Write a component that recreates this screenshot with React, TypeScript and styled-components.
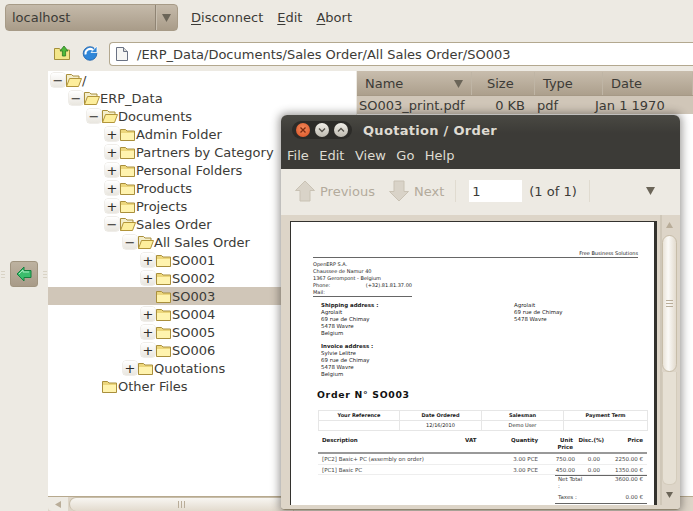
import React from "react";
import styled, { createGlobalStyle } from "styled-components";

const Global = createGlobalStyle`
  html, body { margin: 0; padding: 0; background: #edeae3; }
  body { font-family: "DejaVu Sans", sans-serif; font-size: 13px; color: #3c3b37; }
`;

const Screen = styled.div`
  position: relative; width: 693px; height: 511px; overflow: hidden; background: #edeae3;
`;
const TopBar = styled.div`
  height: 42px; box-sizing: border-box; padding: 4px 0 0 5px; display: flex; align-items: flex-start; gap: 13px;
`;
const Combo = styled.div`
  width: 173px; height: 27px; box-sizing: border-box; display: flex; align-items: center;
  border: 1px solid #a79b87; border-radius: 4px;
  background: linear-gradient(#c5baaa, #a99c89);
`;
const ComboText = styled.span`flex: 1; padding-left: 6px; color: #3c3b37;`;
const ComboArrow = styled.span`
  width: 21px; height: 25px; display: flex; align-items: center; justify-content: center;
  border-left: 1px solid #8f8474; box-shadow: inset 1px 0 0 #c8bfb0;
`;
const Tri = styled.svg`display: block;`;
const Menu = styled.div`display: flex; gap: 14px; height: 27px; align-items: center;`;
const MenuItem = styled.span`color: #3c3b37; u { text-underline-offset: 2px; }`;
const AddrBar = styled.div`
  height: 29px; display: flex; align-items: flex-start; padding-left: 54px;
`;
const ToolIcon = styled.svg`margin: 3px 12px 0 0; flex: none;`;
const AddrInput = styled.div`
  flex: 1; margin-left: -1px; height: 24px; box-sizing: border-box; display: flex; align-items: center; gap: 9px;
  padding-left: 6px; background: #fff; border: 1px solid #b3a88f; border-right: 0; border-radius: 4px 0 0 4px;
  white-space: nowrap; color: #3c3b37;
`;
const Body = styled.div`display: flex; height: 440px;`;
const Side = styled.div`
  width: 48px; flex: none; display: flex; align-items: center; justify-content: space-between;
  padding: 0 1px 34px 1px; box-sizing: border-box;
`;
const Grip = styled.div`
  width: 4px; height: 7px;
  background: repeating-linear-gradient(#d9d3c5 0 1px, transparent 1px 3px);
`;
const BackBtn = styled.div`
  width: 28px; height: 26px; box-sizing: border-box; border-radius: 3px; border: 1px solid #a0947f;
  background: linear-gradient(#bdb2a0, #a89b88); display: flex; align-items: center; justify-content: center;
`;
const Panes = styled.div`flex: 1; display: flex; flex-direction: column; min-width: 0;`;
const PaneRow = styled.div`flex: 1; display: flex; gap: 1px; min-height: 0;`;
const TreePane = styled.div`width: 308px; flex: none; background: #fff;`;
const TreeRow = styled.div<{ $depth: number; $sel?: boolean }>`
  height: 18px; display: flex; align-items: center; padding-left: ${(p) => 3 + p.$depth * 18}px;
  background: ${(p) => (p.$sel ? "#d0c6b8" : "transparent")}; white-space: nowrap; color: #3c3b37;
`;
const Expander = styled.span`
  width: 14px; height: 14px; flex: none; box-sizing: border-box; border-radius: 3px;
  background: linear-gradient(#ffffff, #e9e6df); box-shadow: 0 0 0 .5px #e0dcd3;
  display: flex; align-items: center; justify-content: center; color: #2e2d2a;
`;
const ExpanderGap = styled.span`width: 14px; flex: none;`;
const FolderIcon = styled.svg`width: 17px; height: 15px; flex: none;`;
const ListPane = styled.div`flex: 1; background: #fff; min-width: 0;`;
const ListHead = styled.div`
  height: 25px; display: grid; grid-template-columns: 115px 63px 68px 1fr; background: linear-gradient(#c8bdad, #ab9e8b);
  box-shadow: inset 0 -1px 0 #a69986;
`;
const HeadCell = styled.div<{ $pad: number; $split?: boolean }>`
  padding-left: ${(p) => p.$pad}px; display: flex; align-items: center; color: #3c3b37;
  justify-content: ${(p) => (p.$split ? "space-between" : "flex-start")};
  box-shadow: inset -1px 0 0 #bfb5a5; padding-right: 9px; margin: 1px 0;
`;
const ListRow = styled.div`
  height: 18px; display: grid; grid-template-columns: 115px 53px 68px 1fr; background: #d0c6b8; align-items: center;
  color: #3c3b37;
`;
const ListCell = styled.div<{ $pad?: number; $right?: boolean }>`
  padding-left: ${(p) => p.$pad ?? 0}px; text-align: ${(p) => (p.$right ? "right" : "left")}; white-space: nowrap;
`;
const HScroll = styled.div`
  height: 15px; box-sizing: border-box; border-top: 1px solid #b7a98e; background: #ddd5c8; display: flex; align-items: stretch;
`;
const HArrow = styled.div`
  width: 20px; background: #edeae3; border-radius: 0 0 0 4px; display: flex; align-items: center; justify-content: center;
`;
const HThumb = styled.div`
  width: 225px; margin-left: 1px; box-sizing: border-box; border: 1px solid #c7bda9; border-bottom: 0; border-radius: 7px 0 0 7px;
  background: linear-gradient(#f8f6f2, #e2dacd); display: flex; align-items: center; justify-content: center;
`;
const ThumbGrip = styled.div`
  width: 7px; height: 7px; background: repeating-linear-gradient(90deg, #b9ad99 0 1px, transparent 1px 3px);
`;

/* floating window */
const Win = styled.div`
  position: absolute; left: 281px; top: 115px; width: 399px; height: 395px; display: flex; flex-direction: column;
  border-radius: 6px 6px 4px 4px; background: #edeae3; overflow: hidden;
  box-shadow: 0 0 9px 2px rgba(40,36,30,.45); border-bottom: 1px solid #8f8570; box-sizing: border-box;
`;
const TitleBar = styled.div`
  height: 30px; flex: none; background: linear-gradient(#4a4943, #3c3b37 60%); display: flex; align-items: center; padding-left: 11px; gap: 11px;
`;
const WinBtns = styled.div`
  width: 60px; height: 18px; border-radius: 9px; background: #2c2b28; display: flex; align-items: center; justify-content: space-around; padding: 0 2px; box-sizing: border-box;
`;
const WinBtn = styled.span<{ $close?: boolean }>`
  width: 14px; height: 14px; border-radius: 50%; display: flex; align-items: center; justify-content: center;
  background: ${(p) => (p.$close ? "radial-gradient(circle at 50% 40%, #f58b5c, #d84f22)" : "linear-gradient(#f0eee8, #bdb9af)")};
`;
const WinTitle = styled.span`color: #dfdbd2; font-weight: bold; font-size: 13px; letter-spacing: .3px;`;
const WinMenu = styled.div`
  height: 24px; box-sizing: border-box; padding: 0 0 4px 6px; flex: none; background: #3c3b37; display: flex; align-items: center; gap: 10.5px; color: #dfdbd2;
`;
const WinTools = styled.div`
  height: 46px; box-sizing: border-box; padding: 0 0 2px 14px; flex: none; display: flex; align-items: center; color: #3c3b37; background: #edeae3;
`;
const GhostLabel = styled.span<{ $after: number }>`color: #b3ab9c; margin: 0 ${(p) => p.$after}px 0 5px;`;
const ToolSep = styled.span<{ $before: number; $after: number }>`
  width: 1px; height: 22px; background: #e0dbd0; margin: 0 ${(p) => p.$after}px 0 ${(p) => p.$before}px;
`;
const PageInput = styled.div`
  width: 53px; height: 22px; background: #fff; padding-left: 3px; box-sizing: border-box; display: flex; align-items: center; margin-right: 7px; color: #3c3b37;
`;
const ToolRight = styled.div`flex: 1; display: flex; justify-content: flex-end; padding-right: 25px;`;
const DocArea = styled.div`
  flex: 1; display: flex; min-height: 0; background: #ddd5c8; padding: 0 2px 4px 2px;
`;
const DocView = styled.div`flex: 1; min-width: 0; overflow: hidden; padding: 6px 0 0 7px; background: #ddd5c8;`;
const Page = styled.div`
  width: 367px; height: 290px; box-sizing: border-box; background: #fff; color: #222; overflow: hidden;
  border: solid #33322e; border-width: 1px 3px 0 1px; padding: 28px 0 0 22px;
  font-size: 5px; line-height: 7px;
`;
const DocBrand = styled.div`
  width: 325px; text-align: right; border-bottom: 1px solid #666; height: 7px; box-sizing: content-box; line-height: 7px;
`;
const Company = styled.div`
  width: 99px; margin-top: 3px; border-bottom: 1px solid #666; height: 35px;
`;
const PhoneLine = styled.div`display: flex; justify-content: space-between;`;
const Addresses = styled.div`display: flex; padding: 5px 0 0 8px; font-size: 5.45px; white-space: nowrap;`;
const AddrCol = styled.div`width: 193px;`;
const AddrRight = styled.div``;
const AddrHead = styled.div`font-weight: bold;`;
const AddrBlock = styled.div`margin-bottom: 6px;`;
const OrderTitle = styled.div`font-size: 9.3px; font-weight: bold; line-height: 12px; letter-spacing: .7px; margin: 11px 0 0 4px; color: #111;`;
const InfoTable = styled.div`
  width: 329px; margin: 9px 0 0 5px; display: grid; grid-template-columns: 81px 82px 82px 84px;
  border-top: 1px solid #e6e6e6; border-left: 1px solid #e6e6e6;
`;
const InfoCell = styled.div<{ $bold?: boolean }>`
  height: 9px; line-height: 9px; text-align: center; border-right: 1px solid #e6e6e6; border-bottom: 1px solid #e6e6e6;
  font-weight: ${(p) => (p.$bold ? "bold" : "normal")};
`;
const LineGrid = styled.div`
  display: grid; grid-template-columns: 143px 12px 61px 37px 29px 39px; margin-left: 5px; width: 329px; padding-left: 4px; box-sizing: border-box;
  font-size: 5.5px;
`;
const LineHead = styled(LineGrid)`
  margin-top: 6px; height: 17px; font-weight: bold; border-bottom: 2px solid #999;
`;
const LineRow = styled(LineGrid)`
  height: 10.5px; line-height: 10.5px; border-bottom: 1px solid #eee; color: #444;
`;
const Cell = styled.div<{ $a?: string; $pr?: number }>`
  text-align: ${(p) => p.$a ?? "left"}; white-space: nowrap; padding-right: ${(p) => p.$pr ?? 0}px;
`;
const Totals = styled.div`
  margin: 0 0 0 242px; width: 92px; border-top: 1px solid #666; display: grid; grid-template-columns: 1fr auto; padding: 0 4px 0 3px; box-sizing: border-box; color: #444;
  font-size: 5.5px;
`;
const TotalLabel = styled.div`width: 27px; padding-bottom: 4px;`;
const TotalRule = styled.div`grid-column: 1 / -1; height: 1px; background: #666; margin: -2px -4px 0 -3px;`;
const VScroll = styled.div`
  width: 18px; flex: none; display: flex; flex-direction: column; align-items: center; background: #ddd5c8; box-shadow: inset 2px 0 0 #cfc7b8;
`;
const VArrow = styled.div`height: 20px; flex: none; display: flex; align-items: center; justify-content: center; width: 100%;`;
const VThumb = styled.div`
  width: 15px; height: 137px; flex: none; box-sizing: border-box; border: 1px solid #c7bda9; border-radius: 8px;
  background: linear-gradient(90deg, #e9e3d8, #fbfaf7 40%, #e2dacd); display: flex; align-items: center; justify-content: center;
`;
const VGrip = styled.div`
  width: 7px; height: 7px; background: repeating-linear-gradient(#b9ad99 0 1px, transparent 1px 3px);
`;
const VTrack = styled.div`
  flex: 1; width: 15px; box-sizing: border-box; border: 1px solid #d4ccbc; border-top: 0; border-radius: 0 0 6px 6px; background: #e6e0d4;
`;

const Tr = ({ c = "#6b6558", w = 9, h = 8, dir = "down" }: { c?: string; w?: number; h?: number; dir?: string }) => {
  const pts = dir === "down" ? `0,0 ${w},0 ${w / 2},${h}` : dir === "up" ? `0,${h} ${w},${h} ${w / 2},0` : `${w},0 ${w},${h} 0,${h / 2}`;
  return <Tri width={w} height={h} viewBox={`0 0 ${w} ${h}`}><polygon points={pts} fill={c} /></Tri>;
};

const OpenFolder = () => (
  <FolderIcon viewBox="0 0 17 15">
    <path d="M1.5 13.5V1.5h5l1.5 1.5h6v3" fill="#f4eecb" stroke="#a98f3c" />
    <path d="M1.5 13.5 4.5 5.5h12l-3 8z" fill="#fdee9c" stroke="#b2953a" strokeLinejoin="round" />
  </FolderIcon>
);
const ClosedFolder = () => (
  <FolderIcon viewBox="0 0 17 15">
    <path d="M1.5 13.5V2.5h5l1.5 1.5h7.5v9.5z" fill="#ecd67c" stroke="#a98f3c" strokeLinejoin="round" />
    <path d="M2 13V6h13v7z" fill="#fff3ae" />
  </FolderIcon>
);

type Node = { d: number; t: string; exp?: "+" | "-"; open?: boolean; sel?: boolean };
const nodes: Node[] = [
  { d: 0, t: "/", exp: "-", open: true },
  { d: 1, t: "ERP_Data", exp: "-", open: true },
  { d: 2, t: "Documents", exp: "-", open: true },
  { d: 3, t: "Admin Folder", exp: "+" },
  { d: 3, t: "Partners by Category", exp: "+" },
  { d: 3, t: "Personal Folders", exp: "+" },
  { d: 3, t: "Products", exp: "+" },
  { d: 3, t: "Projects", exp: "+" },
  { d: 3, t: "Sales Order", exp: "-", open: true },
  { d: 4, t: "All Sales Order", exp: "-", open: true },
  { d: 5, t: "SO001", exp: "+" },
  { d: 5, t: "SO002", exp: "+" },
  { d: 5, t: "SO003", sel: true },
  { d: 5, t: "SO004", exp: "+" },
  { d: 5, t: "SO005", exp: "+" },
  { d: 5, t: "SO006", exp: "+" },
  { d: 4, t: "Quotations", exp: "+" },
  { d: 2, t: "Other Files" },
];

export default function App() {
  return (
    <Screen>
      <Global />
      <TopBar>
        <Combo>
          <ComboText>localhost</ComboText>
          <ComboArrow><Tr c="#6b6558" /></ComboArrow>
        </Combo>
        <Menu>
          <MenuItem><u>D</u>isconnect</MenuItem>
          <MenuItem><u>E</u>dit</MenuItem>
          <MenuItem><u>A</u>bort</MenuItem>
        </Menu>
      </TopBar>
      <AddrBar>
        <ToolIcon width="16" height="16" viewBox="0 0 16 16">
          <path d="M.5 14.5V3.5h5l1 1.5h9v9.5z" fill="#f3e68a" stroke="#a48f3a" strokeLinejoin="round" />
          <path d="M10 1 14 6h-2.4v5H8.4V6H6z" fill="#4fb83a" stroke="#2c7a22" strokeWidth=".8" strokeLinejoin="round" />
        </ToolIcon>
        <ToolIcon width="16" height="16" viewBox="0 0 16 16">
          <circle cx="8" cy="8.5" r="6.8" fill="#2f86d8" stroke="#1a5ea8" strokeWidth=".8" />
          <path d="M3.6 9.5A4.6 4.6 0 0 1 11 5" fill="none" stroke="#fff" strokeWidth="2" />
          <path d="M9 7.5 15 1v6.5z" fill="#2f86d8" stroke="#fff" strokeWidth=".8" />
        </ToolIcon>
        <AddrInput>
          <svg width="12" height="14" viewBox="0 0 12 14">
            <path d="M.5.5h7l4 4v9H.5z" fill="#f6f6f4" stroke="#6a7284" />
            <path d="M7.5.5v4h4" fill="#dcdcd8" stroke="#6a7284" />
          </svg>
          /ERP_Data/Documents/Sales Order/All Sales Order/SO003
        </AddrInput>
      </AddrBar>
      <Body>
        <Side>
          <Grip />
          <BackBtn>
            <svg width="16" height="16" viewBox="0 0 16 16">
              <path d="M1 8 8 1v3.5h7v7H8V15z" fill="#3bbd6c" stroke="#15803f" strokeLinejoin="round" />
              <path d="M3 8 7 4v2h6" fill="none" stroke="#a8ecc0" />
            </svg>
          </BackBtn>
          <Grip />
        </Side>
        <Panes>
          <PaneRow>
            <TreePane>
              {nodes.map((n) => (
                <TreeRow key={n.t} $depth={n.d} $sel={n.sel}>
                  {n.exp ? <Expander>{n.exp === "+" ? "+" : "−"}</Expander> : <ExpanderGap />}
                  {n.open ? <OpenFolder /> : <ClosedFolder />}
                  <span>{n.t}</span>
                </TreeRow>
              ))}
            </TreePane>
            <ListPane>
              <ListHead>
                <HeadCell $pad={8} $split>Name<Tr c="#6b6558" /></HeadCell>
                <HeadCell $pad={15}>Size</HeadCell>
                <HeadCell $pad={8}>Type</HeadCell>
                <HeadCell $pad={8}>Date</HeadCell>
              </ListHead>
              <ListRow>
                <ListCell $pad={2}>SO003_print.pdf</ListCell>
                <ListCell $right>0 KB</ListCell>
                <ListCell $pad={12}>pdf</ListCell>
                <ListCell $pad={2}>Jan 1 1970</ListCell>
              </ListRow>
            </ListPane>
          </PaneRow>
          <HScroll>
            <HArrow><Tr c="#b9ad99" dir="left" w={6} h={7} /></HArrow>
            <HThumb><ThumbGrip /></HThumb>
          </HScroll>
        </Panes>
      </Body>
      <Win>
        <TitleBar>
          <WinBtns>
            <WinBtn $close>
              <svg width="8" height="8" viewBox="0 0 8 8"><path d="M1.5 1.5l5 5m0-5-5 5" stroke="#7a2a10" strokeWidth="1.3" /></svg>
            </WinBtn>
            <WinBtn>
              <svg width="8" height="8" viewBox="0 0 8 8"><path d="M1 2.5 4 5.5 7 2.5" fill="none" stroke="#55524b" strokeWidth="1.3" /></svg>
            </WinBtn>
            <WinBtn>
              <svg width="8" height="8" viewBox="0 0 8 8"><path d="M1 5.5 4 2.5 7 5.5" fill="none" stroke="#55524b" strokeWidth="1.3" /></svg>
            </WinBtn>
          </WinBtns>
          <WinTitle>Quotation / Order</WinTitle>
        </TitleBar>
        <WinMenu>
          <span>File</span><span>Edit</span><span>View</span><span>Go</span><span>Help</span>
        </WinMenu>
        <WinTools>
          <svg width="20" height="22" viewBox="0 0 20 22"><path d="M10 1 19.5 10.5H15V21H5V10.5H.5z" fill="#d9d3c8" stroke="#c9c2b4" strokeLinejoin="round" /></svg>
          <GhostLabel $after={14}>Previous</GhostLabel>
          <svg width="20" height="22" viewBox="0 0 20 22"><path d="M10 21 19.5 11.5H15V1H5v10.5H.5z" fill="#d9d3c8" stroke="#c9c2b4" strokeLinejoin="round" /></svg>
          <GhostLabel $after={11}>Next</GhostLabel>
          <ToolSep $before={0} $after={13} />
          <PageInput>1</PageInput>
          <span>(1 of 1)</span>
          <ToolSep $before={12} $after={0} />
          <ToolRight><Tr c="#6b6558" /></ToolRight>
        </WinTools>
        <DocArea>
          <DocView>
            <Page>
              <DocBrand>Free Business Solutions</DocBrand>
              <Company>
                <div>OpenERP S.A.</div>
                <div>Chaussee de Namur 40</div>
                <div>1367 Gerompont - Belgium</div>
                <PhoneLine><span>Phone:</span><span>(+32).81.81.37.00</span></PhoneLine>
                <div>Mail:</div>
              </Company>
              <Addresses>
                <AddrCol>
                  <AddrBlock>
                    <AddrHead>Shipping address :</AddrHead>
                    <div>Agrolait</div>
                    <div>69 rue de Chimay</div>
                    <div>5478 Wavre</div>
                    <div>Belgium</div>
                  </AddrBlock>
                  <AddrHead>Invoice address :</AddrHead>
                  <div>Sylvie Lelitre</div>
                  <div>69 rue de Chimay</div>
                  <div>5478 Wavre</div>
                  <div>Belgium</div>
                </AddrCol>
                <AddrRight>
                  <div>Agrolait</div>
                  <div>69 rue de Chimay</div>
                  <div>5478 Wavre</div>
                </AddrRight>
              </Addresses>
              <OrderTitle>Order N° SO003</OrderTitle>
              <InfoTable>
                <InfoCell $bold>Your Reference</InfoCell>
                <InfoCell $bold>Date Ordered</InfoCell>
                <InfoCell $bold>Salesman</InfoCell>
                <InfoCell $bold>Payment Term</InfoCell>
                <InfoCell />
                <InfoCell>12/16/2010</InfoCell>
                <InfoCell>Demo User</InfoCell>
                <InfoCell />
              </InfoTable>
              <LineHead>
                <Cell>Description</Cell>
                <Cell>VAT</Cell>
                <Cell $a="right">Quantity</Cell>
                <Cell $a="right" $pr={2}>Unit<br />Price</Cell>
                <Cell $a="right">Disc.(%)</Cell>
                <Cell $a="right">Price</Cell>
              </LineHead>
              <LineRow>
                <Cell>[PC2] Basic+ PC (assembly on order)</Cell><Cell />
                <Cell $a="right">3.00 PCE</Cell><Cell $a="right">750.00</Cell><Cell $a="right" $pr={4}>0.00</Cell><Cell $a="right">2250.00 €</Cell>
              </LineRow>
              <LineRow>
                <Cell>[PC1] Basic PC</Cell><Cell />
                <Cell $a="right">3.00 PCE</Cell><Cell $a="right">450.00</Cell><Cell $a="right" $pr={4}>0.00</Cell><Cell $a="right">1350.00 €</Cell>
              </LineRow>
              <Totals>
                <TotalLabel>Net Total :</TotalLabel><Cell $a="right">3600.00 €</Cell>
                <TotalLabel>Taxes :</TotalLabel><Cell $a="right">0.00 €</Cell>
                <TotalRule />
              </Totals>
            </Page>
          </DocView>
          <VScroll>
            <VArrow><Tr c="#b9ad99" dir="up" w={7} h={6} /></VArrow>
            <VThumb><VGrip /></VThumb>
            <VTrack />
            <VArrow><Tr c="#6b6558" w={7} h={6} /></VArrow>
          </VScroll>
        </DocArea>
      </Win>
    </Screen>
  );
}
